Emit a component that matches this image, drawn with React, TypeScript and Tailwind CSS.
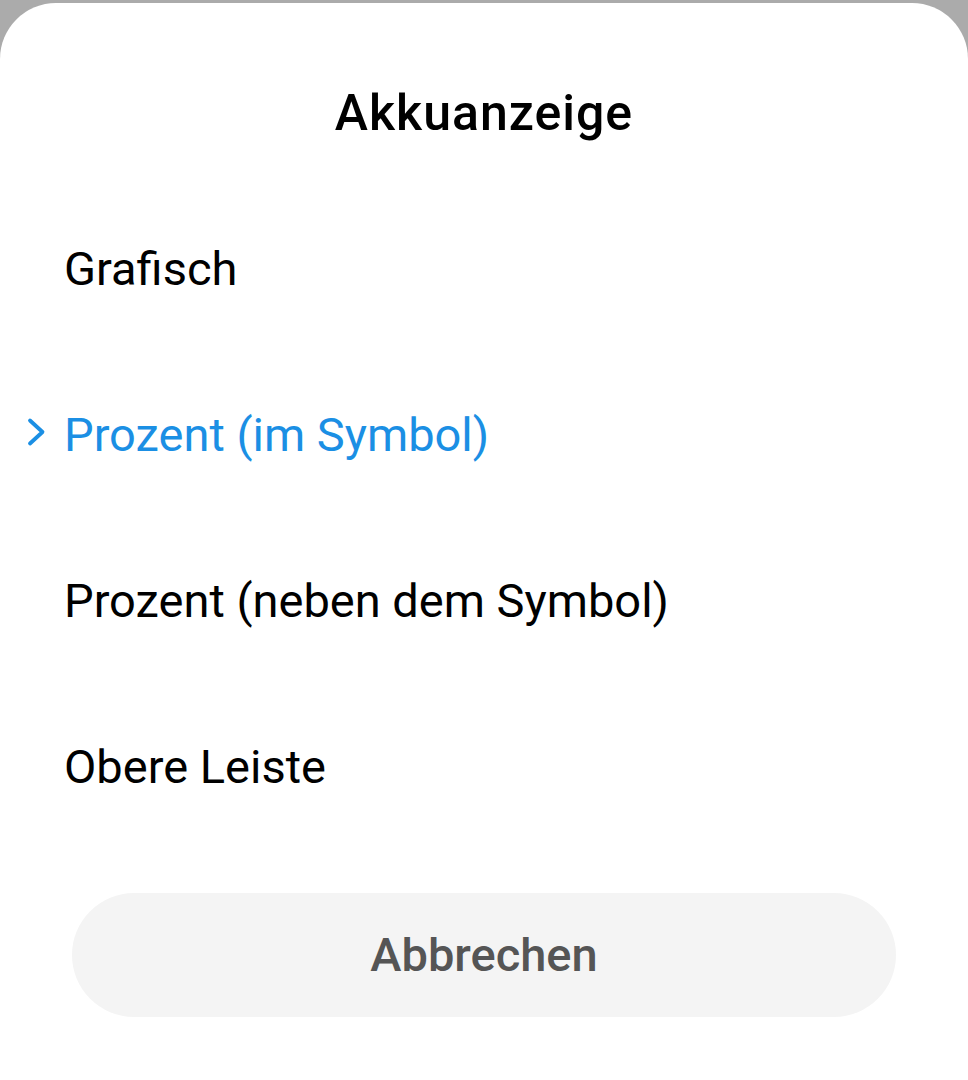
import React from "react";

const options = [
  { label: "Grafisch", selected: false },
  { label: "Prozent (im Symbol)", selected: true },
  { label: "Prozent (neben dem Symbol)", selected: false },
  { label: "Obere Leiste", selected: false },
];

export default function App() {
  return (
    <div
      className="w-[968px] h-[1080px] bg-[#ababab] pt-[3px] overflow-hidden"
      style={{ fontFamily: "Roboto, 'Noto Sans', sans-serif" }}
    >
      <div className="h-full bg-white rounded-t-[56px] flex flex-col">
        <h1 className="pt-[80px] text-center text-[50px] leading-[60px] font-medium tracking-[1px] text-black">
          Akkuanzeige
        </h1>
        <ul className="mt-[98px] flex flex-col gap-[110px]">
          {options.map((opt) => (
            <li
              key={opt.label}
              className={`relative h-[56px] pl-[64px] text-[47px] leading-[56px] ${
                opt.selected ? "text-[#1b8fe4]" : "text-black"
              }`}
            >
              {opt.selected && (
                <svg
                  className="absolute left-[26px] top-[10px]"
                  width={20}
                  height={30}
                  viewBox="0 0 20 30"
                  fill="none"
                >
                  <path
                    d="M4 3.5 L16.5 15 L4 26.5"
                    stroke="#1b8fe4"
                    strokeWidth="3.8"
                    strokeLinecap="round"
                    strokeLinejoin="round"
                  />
                </svg>
              )}
              {opt.label}
            </li>
          ))}
        </ul>
        <div className="px-[72px] mt-[98px]">
          <button className="w-full h-[124px] rounded-full bg-[#f4f4f4] text-[#555555] text-[47px] font-medium">
            Abbrechen
          </button>
        </div>
      </div>
    </div>
  );
}
